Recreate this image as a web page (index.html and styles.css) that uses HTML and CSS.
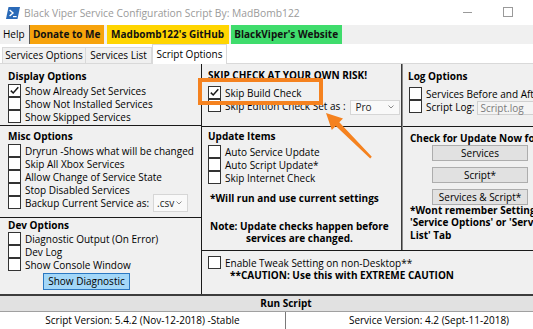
FILE: index.html
```html
<!DOCTYPE html>
<html>
<head>
<meta charset="utf-8">
<link rel="stylesheet" href="styles.css">
</head>
<body>
<div class="window">
  <div class="titlebar">
    <svg class="ps-icon" width="14" height="12" viewBox="0 0 14 12"><polygon points="2.5,0 14,0 11.5,12 0,12" fill="#2a6ab8"/><path d="M3.6 3 L7 6 L3.6 9" fill="none" stroke="#fff" stroke-width="1.4"/><path d="M7 9.6 H10.6" stroke="#fff" stroke-width="1.2"/></svg>
    <span class="title">Black Viper Service Configuration Script By: MadBomb122</span>
    <span class="win-min"></span>
    <span class="win-max"></span>
  </div>
  <div class="menubar">
    <span class="menu-help">Help</span>
    <span class="menu-item donate">Donate to Me</span>
    <span class="menu-item github">Madbomb122's GitHub</span>
    <span class="menu-item website">BlackViper's Website</span>
  </div>
  <div class="tabstrip">
    <span class="tab tab-1">Services Options</span>
    <span class="tab tab-2">Services List</span>
    <span class="tab tab-active">Script Options</span>
  </div>
  <div class="content">
    <div class="col-left">
      <section class="sec sec-display">
        <div class="hdr">Display Options</div>
        <div class="cb-row"><span class="cb"><svg width="11" height="11" viewBox="0 0 11 11"><path d="M1.8 5.6 L4.2 8 L9.3 2.2" fill="none" stroke="#1a1a1a" stroke-width="1.5"/></svg></span>Show Already Set Services</div>
        <div class="cb-row"><span class="cb"></span>Show Not Installed Services</div>
        <div class="cb-row"><span class="cb"></span>Show Skipped Services</div>
      </section>
      <section class="sec sec-misc">
        <div class="hdr">Misc Options</div>
        <div class="cb-row"><span class="cb"></span>Dryrun -Shows what will be changed</div>
        <div class="cb-row"><span class="cb"></span>Skip All Xbox Services</div>
        <div class="cb-row"><span class="cb"></span>Allow Change of Service State</div>
        <div class="cb-row"><span class="cb"></span>Stop Disabled Services</div>
        <div class="cb-row"><span class="cb"></span>Backup Current Service as:<span class="combo combo-csv"><span class="combo-val">.csv</span><svg class="chev" width="6" height="4" viewBox="0 0 6 4"><path d="M0.5 0.5 L3 3 L5.5 0.5" fill="none" stroke="#8a8a8a" stroke-width="1"/></svg></span></div>
      </section>
      <section class="sec sec-dev">
        <div class="hdr">Dev Options</div>
        <div class="cb-row"><span class="cb"></span>Diagnostic Output (On Error)</div>
        <div class="cb-row"><span class="cb"></span>Dev Log</div>
        <div class="cb-row"><span class="cb"></span>Show Console Window</div>
        <div class="btn btn-diag">Show Diagnostic</div>
      </section>
    </div>
    <div class="col-rest">
      <div class="top-grid">
        <div class="col-mid">
          <section class="sec sec-skip">
            <div class="hdr hdr-tight">SKIP CHECK AT YOUR OWN RISK!</div>
            <div class="cb-row cb-first"><span class="cb"><svg width="11" height="11" viewBox="0 0 11 11"><path d="M1.8 5.6 L4.2 8 L9.3 2.2" fill="none" stroke="#1a1a1a" stroke-width="1.5"/></svg></span>Skip Build Check</div>
            <div class="cb-row"><span class="cb"></span>Skip Edition Check Set as :<span class="combo combo-pro"><span class="combo-val">Pro</span><svg class="chev" width="6" height="4" viewBox="0 0 6 4"><path d="M0.5 0.5 L3 3 L5.5 0.5" fill="none" stroke="#8a8a8a" stroke-width="1"/></svg></span></div>
          </section>
          <section class="sec sec-update">
            <div class="hdr hdr-tight">Update Items</div>
            <div class="cb-row cb-upd"><span class="cb"></span>Auto Service Update</div>
            <div class="cb-row"><span class="cb"></span>Auto Script Update*</div>
            <div class="cb-row"><span class="cb"></span>Skip Internet Check</div>
            <div class="bold-note will-run">*Will run and use current settings</div>
            <div class="bold-note update-note">Note: Update checks happen before<br>services are changed.</div>
          </section>
        </div>
        <div class="col-right">
          <section class="sec sec-log">
            <div class="hdr hdr-log">Log Options</div>
            <div class="cb-row cb-first"><span class="cb"></span>Services Before and After</div>
            <div class="cb-row"><span class="cb"></span>Script Log:<span class="textbox">Script.log</span></div>
          </section>
          <section class="sec sec-check">
            <div class="hdr hdr-tight">Check for Update Now for</div>
            <div class="btn btn-upd">Services</div>
            <div class="btn btn-upd btn-next">Script*</div>
            <div class="btn btn-upd btn-next">Services &amp; Script*</div>
            <div class="bold-note wont">*Wont remember Settings in<br>'Service Options' or 'Services<br>List' Tab</div>
          </section>
        </div>
      </div>
      <section class="sec-tweak">
        <div class="cb-row"><span class="cb"></span>Enable Tweak Setting on non-Desktop**</div>
        <div class="bold-note caution">**CAUTION: Use this with EXTREME CAUTION</div>
      </section>
    </div>
  </div>
  <div class="runbar">Run Script</div>
  <div class="statusbar">
    <span class="status-cell status-left">Script Version: 5.4.2 (Nov-12-2018) -Stable</span>
    <span class="status-cell status-right">Service Version: 4.2 (Sept-11-2018)</span>
  </div>
  <svg class="annotation" width="533" height="329" viewBox="0 0 533 329">
    <rect x="200" y="80" width="121" height="23" fill="none" stroke="#f5821f" stroke-width="4"/>
    <polygon points="326,113 343,118.5 339.3,122.3 371.8,156.8 370.2,158.4 335.8,126.1 331.8,129.9" fill="#f5821f"/>
  </svg>
</div>
</body>
</html>
```

FILE: styles.css
```css
html, body {
  margin: 0;
  padding: 0;
}
body {
  width: 533px;
  height: 329px;
  overflow: hidden;
  background: #ffffff;
  font-family: "Open Sans", "Noto Sans", sans-serif;
  font-size: 10px;
  color: #000;
}
.window {
  position: relative;
  width: 572px;
  height: 329px;
}
.titlebar {
  height: 25px;
  display: flex;
  align-items: center;
  padding-left: 6px;
  background: #ffffff;
}
.ps-icon {
  margin-right: 4px;
  flex: none;
}
.title {
  font-size: 10.3px;
  color: #9a9a9a;
  white-space: nowrap;
}
.win-min {
  margin-left: auto;
  width: 9px;
  height: 1px;
  background: #9a9a9a;
}
.win-max {
  margin-left: 31px;
  margin-right: 59px;
  width: 8px;
  height: 8px;
  border: 1px solid #9a9a9a;
  margin-top: -1px;
}
.menubar {
  height: 19px;
  display: flex;
  background: #f0f0f0;
  line-height: 19px;
}
.menu-help {
  padding: 0 4px 0 3px;
  border-right: 1px solid #5a5a5a;
}
.menu-item {
  font-weight: 700;
  text-align: center;
  color: #111;
}
.donate { width: 74px; background: #f7a30c; }
.github { width: 122px; margin-left: 3px; background: #ffd500; }
.website { width: 111px; margin-left: 2px; background: #3fdc6c; }
.tabstrip {
  height: 20px;
  box-sizing: border-box;
  display: flex;
  align-items: flex-end;
  padding-left: 2px;
  border-bottom: 1px solid #d9d9d9;
  background: #ffffff;
}
.tab {
  box-sizing: border-box;
  height: 16px;
  line-height: 14px;
  text-align: center;
  background: #f0f0f0;
  border: 1px solid #d9d9d9;
  border-bottom: none;
  white-space: nowrap;
}
.tab-1 { width: 84px; }
.tab-2 { width: 66px; border-left: none; }
.tab-active {
  width: 75px;
  height: 20px;
  margin-bottom: -1px;
  line-height: 19px;
  background: #ffffff;
}
.content {
  height: 230px;
  display: flex;
  background: #f0f0f0;
}
.col-left {
  width: 202px;
  box-sizing: border-box;
  border-right: 1px solid #1a1a1a;
  display: flex;
  flex-direction: column;
}
.sec {
  box-sizing: border-box;
  border-bottom: 1px solid #1a1a1a;
  white-space: nowrap;
  overflow: visible;
}
.hdr {
  font-weight: 700;
  line-height: 15px;
}
.hdr-tight { line-height: 14px; }
.cb-row {
  display: flex;
  align-items: center;
  height: 13px;
  white-space: nowrap;
}
.cb {
  box-sizing: border-box;
  width: 13px;
  height: 13px;
  border: 1px solid #333333;
  background: #ffffff;
  margin-right: 4px;
  flex: none;
  display: flex;
  align-items: center;
  justify-content: center;
}
.sec-display {
  height: 62px;
  padding: 5px 0 0 8px;
}
.sec-misc {
  height: 92px;
  padding: 3px 0 0 8px;
}
.sec-dev {
  flex: 1;
  padding: 0 0 0 8px;
  border-bottom: none;
}
.sec-dev .hdr { line-height: 14px; }
.combo {
  box-sizing: border-box;
  display: flex;
  align-items: center;
  justify-content: space-between;
  background: #f9f9f9;
  border: 1px solid #d6d6d6;
  flex: none;
}
.combo-val { color: #222; }
.chev { margin-right: 5px; }
.combo-csv {
  width: 35px;
  height: 18px;
  margin-left: 4px;
  padding-left: 3px;
}
.combo-pro {
  width: 50px;
  height: 15px;
  margin-left: 4px;
  margin-top: 3px;
  padding-left: 5px;
}
.btn {
  box-sizing: border-box;
  text-align: center;
  background: #e1e1e1;
  border: 1px solid #adadad;
  white-space: nowrap;
}
.btn-diag {
  width: 87px;
  height: 17px;
  line-height: 15px;
  margin: 2px 0 0 35px;
  background: #a3d7f8;
  border-color: #2b78c2;
}
.col-rest {
  flex: 1;
  display: flex;
  flex-direction: column;
}
.top-grid {
  height: 187px;
  box-sizing: border-box;
  border-bottom: 1px solid #1a1a1a;
  display: flex;
}
.col-mid {
  width: 200px;
  box-sizing: border-box;
  border-right: 1px solid #3a3a3a;
  display: flex;
  flex-direction: column;
}
.col-right {
  flex: 1;
  box-sizing: border-box;
  border-left: 1px solid #8a8a8a;
  display: flex;
  flex-direction: column;
}
.sec-skip {
  height: 63px;
  padding: 4px 0 0 6px;
}
.cb-first { margin-top: 4px; }
.sec-update {
  flex: 1;
  padding: 2px 0 0 6px;
  border-bottom: none;
}
.cb-upd { margin-top: 2px; }
.bold-note {
  font-weight: 700;
  white-space: nowrap;
}
.will-run {
  line-height: 13px;
  margin: 8px 0 0 2px;
}
.update-note {
  display: inline-block;
  align-self: flex-start;
  line-height: 12.5px;
  text-align: center;
  margin: 14.5px 0 0 2px;
}
.sec-log {
  height: 63px;
  padding: 5px 0 0 6px;
}
.hdr-log { line-height: 14px; margin-left: -1px; }
.textbox {
  box-sizing: border-box;
  height: 14px;
  margin-left: 3px;
  margin-top: 2px;
  padding-left: 2px;
  width: 80px;
  line-height: 12px;
  color: #7a7a7a;
  background: #f4f4f4;
  border: 1px solid #d0d0d0;
  flex: none;
}
.sec-check {
  flex: 1;
  padding: 4px 0 0 7px;
  border-bottom: none;
}
.btn-upd {
  width: 96px;
  height: 16px;
  line-height: 14px;
  margin-left: 22px;
}
.btn-next { margin-top: 6px; }
.wont {
  line-height: 12.5px;
  margin-top: -1.5px;
}
.sec-tweak {
  flex: 1;
  padding: 5px 0 0 6px;
  white-space: nowrap;
}
.caution {
  line-height: 13px;
  padding-left: 22px;
}
.runbar {
  height: 18px;
  box-sizing: border-box;
  border-top: 2px solid #3c3c3c;
  border-bottom: 1px solid #a0a0a0;
  background: #e1e1e1;
  text-align: center;
  font-weight: 700;
  line-height: 15px;
}
.statusbar {
  height: 17px;
  display: flex;
  background: #ffffff;
  line-height: 17px;
}
.status-cell {
  text-align: center;
  white-space: nowrap;
}
.status-left {
  width: 286px;
  box-sizing: border-box;
  border-right: 1px solid #7a7a7a;
}
.status-right { flex: 1; }
.annotation {
  position: absolute;
  left: 0;
  top: 0;
  pointer-events: none;
}
```
